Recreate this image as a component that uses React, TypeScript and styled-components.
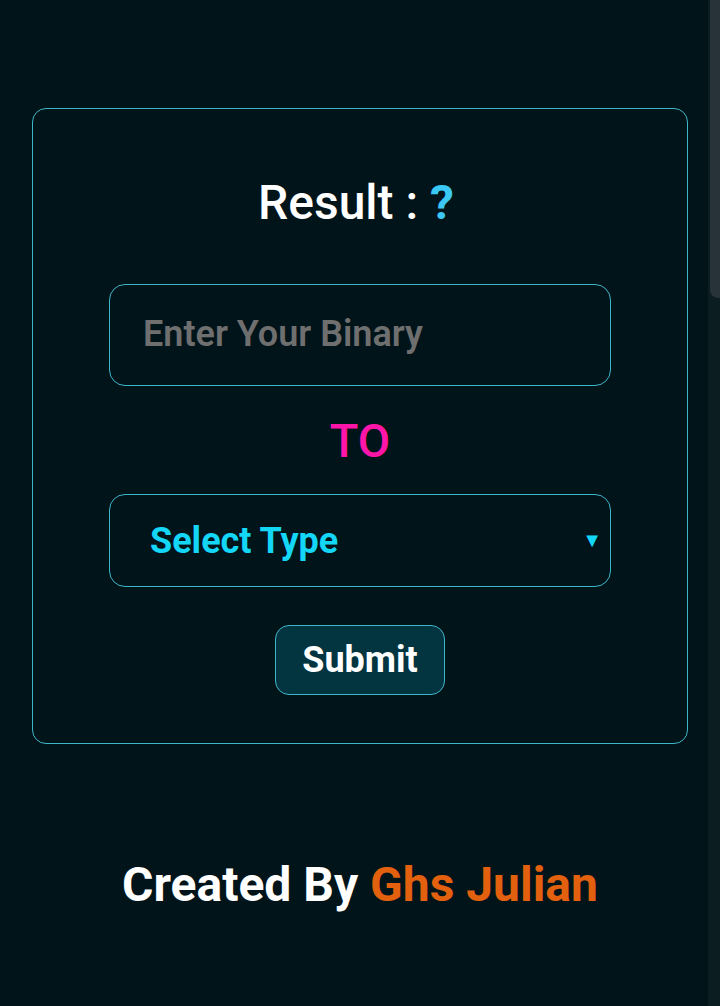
import React from 'react'
import styled, { createGlobalStyle } from 'styled-components'

const GlobalStyle = createGlobalStyle`
  html, body {
    margin: 0;
    padding: 0;
    background-color: #01141a;
    font-family: Roboto, 'Liberation Sans', sans-serif;
  }
`

const Page = styled.div`
  min-height: 1006px;
  background-color: #01141a;
  display: flex;
  flex-direction: column;
  align-items: stretch;
  padding-top: 108px;
  box-sizing: border-box;
`

const Card = styled.div`
  margin: 0 32px;
  height: 636px;
  box-sizing: border-box;
  border: 1px solid #3eb6c9;
  border-radius: 14px;
  display: flex;
  flex-direction: column;
  align-items: center;
  padding-top: 64px;
`

const Title = styled.h1`
  margin: 0;
  padding-right: 8px;
  font-size: 48px;
  font-weight: 500;
  line-height: 60px;
  color: #ffffff;
`

const Question = styled.span`
  color: #3cc8f5;
  font-weight: 700;
`

const Field = styled.div<{ $height: number }>`
  width: 502px;
  height: ${p => p.$height}px;
  box-sizing: border-box;
  border: 1px solid #3eb6c9;
  border-radius: 16px;
  display: flex;
  align-items: center;
  position: relative;
`

const Input = styled.input`
  width: 100%;
  height: 100%;
  background: transparent;
  border: none;
  outline: none;
  padding: 0 0 2px 33px;
  box-sizing: border-box;
  font-family: inherit;
  font-size: 36px;
  font-weight: 600;
  color: #ffffff;

  &::placeholder {
    color: #6f6f6f;
  }
`

const To = styled.div`
  font-size: 47px;
  font-weight: 500;
  color: #ff16a8;
  line-height: 54px;
  margin: 28px 0 26px;
`

const SelectLabel = styled.span`
  padding-left: 40px;
  font-size: 36px;
  font-weight: 700;
  color: #14d6f7;
  flex: 1;
`

const Arrow = styled.span`
  position: absolute;
  right: 8px;
  top: 50%;
  transform: translateY(-54%);
  font-size: 20px;
  color: #14d6f7;
`

const Button = styled.button`
  margin-top: 38px;
  width: 170px;
  height: 70px;
  box-sizing: border-box;
  background-color: #033541;
  border: 1px solid #3eb6c9;
  border-radius: 14px;
  font-family: inherit;
  font-size: 36px;
  font-weight: 700;
  color: #ffffff;
  padding: 0;
`

const Footer = styled.div`
  margin-top: 113px;
  text-align: center;
  font-size: 48px;
  font-weight: 700;
  color: #ffffff;
  line-height: 56px;
`

const Name = styled.span`
  color: #e2600e;
`

const ScrollThumb = styled.div`
  position: fixed;
  top: 0;
  right: 0;
  width: 10px;
  height: 298px;
  background-color: #273338;
  border-bottom-left-radius: 8px;
`

const ScrollTrack = styled.div`
  position: fixed;
  top: 0;
  right: 0;
  width: 12px;
  height: 100%;
  background-color: #0c1d22;
`

const App: React.FC = () => {
  return (
    <>
      <GlobalStyle />
      <Page>
        <Card>
          <Title>
            Result : <Question>?</Question>
          </Title>
          <Field $height={102} style={{ marginTop: 51 }}>
            <Input placeholder="Enter Your Binary" />
          </Field>
          <To>TO</To>
          <Field $height={93}>
            <SelectLabel>Select Type</SelectLabel>
            <Arrow>▼</Arrow>
          </Field>
          <Button>Submit</Button>
        </Card>
        <Footer>
          Created By <Name>Ghs Julian</Name>
        </Footer>
      </Page>
      <ScrollTrack />
      <ScrollThumb />
    </>
  )
}

export default App
